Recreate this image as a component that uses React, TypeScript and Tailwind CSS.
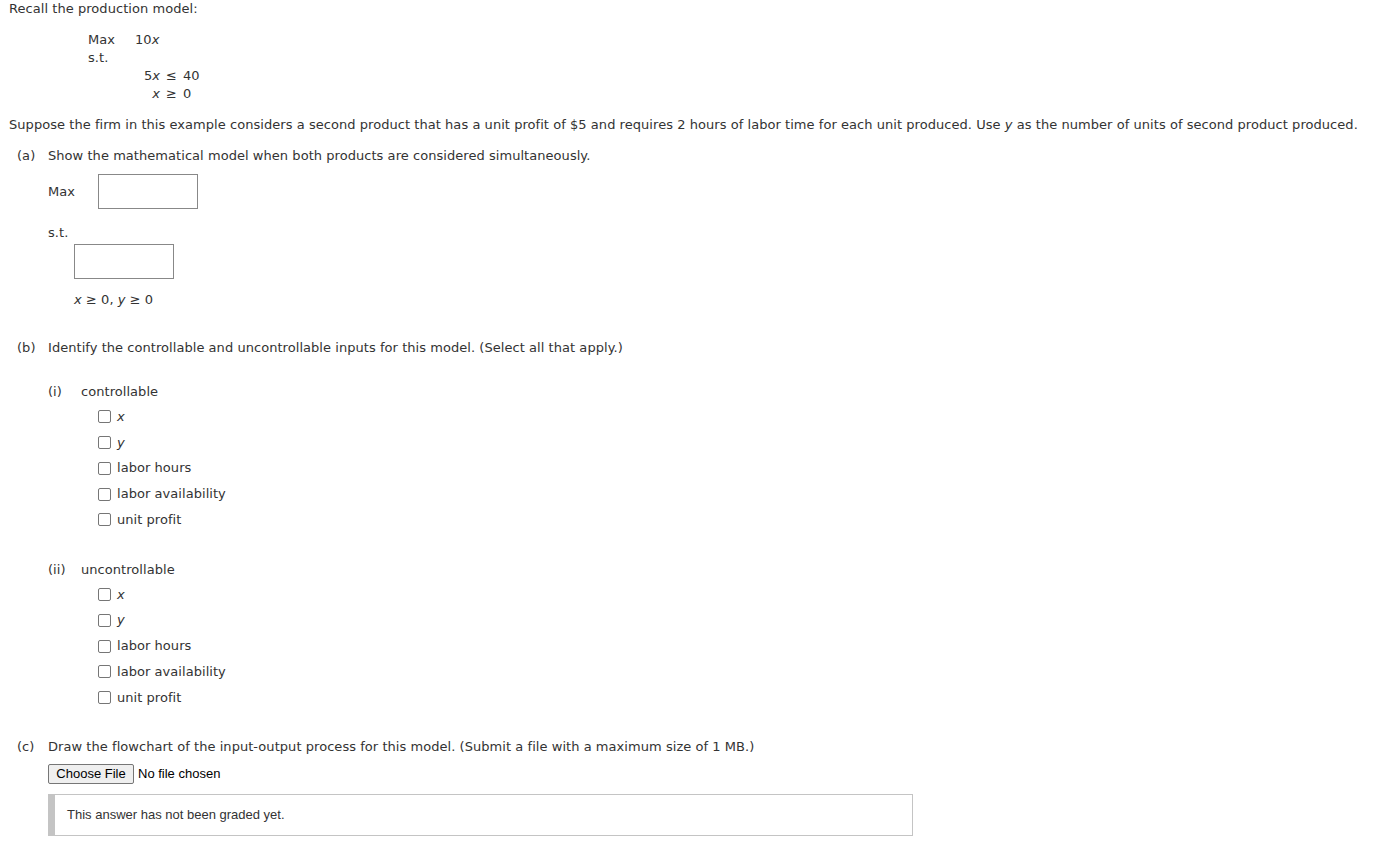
export default function App() {
  const options = ['x', 'y', 'labor hours', 'labor availability', 'unit profit'];

  const CheckList = () => (
    <div className="ml-[50px]">
      {options.map((o) => (
        <label key={o} className="flex h-[25.75px] items-center gap-[6px]">
          <span className="inline-block h-[13px] w-[13px] rounded-[2px] border border-[#767676] bg-white" />
          {o.length === 1 ? <i>{o}</i> : <span>{o}</span>}
        </label>
      ))}
    </div>
  );

  return (
    <div className="min-h-screen bg-white px-[9px] text-[13px] leading-[18px] tracking-[0.05px] text-[#333] font-['DejaVu_Sans',Verdana,sans-serif]">
      <p>Recall the production model:</p>

      {/* original model */}
      <div className="mt-[13px] ml-[79px]">
        <div className="flex">
          <span className="w-[47px]">Max</span>
          <span>
            10<i>x</i>
          </span>
        </div>
        <div>s.t.</div>
        <div className="ml-[55px] grid grid-cols-[17px_23px_auto]">
          <span className="text-right">
            5<i>x</i>
          </span>
          <span className="pl-[6px]">≤</span>
          <span>40</span>
          <span className="text-right">
            <i>x</i>
          </span>
          <span className="pl-[6px]">≥</span>
          <span>0</span>
        </div>
      </div>

      <p className="mt-[13px]">
        Suppose the firm in this example considers a second product that has a unit profit of $5 and requires 2 hours of labor
        time for each unit produced. Use <i>y</i> as the number of units of second product produced.
      </p>

      {/* part a */}
      <div className="mt-[13px] flex pl-[8px]">
        <span className="w-[31px]">(a)</span>
        <span>Show the mathematical model when both products are considered simultaneously.</span>
      </div>
      <div className="ml-[39px]">
        <div className="mt-[9px] flex items-center">
          <span className="w-[50px]">Max</span>
          <div className="h-[35px] w-[100px] border border-[#888] bg-white" />
        </div>
        <div className="mt-[15px]">s.t.</div>
        <div className="ml-[26px]">
          <div className="mt-[2px] h-[35px] w-[100px] border border-[#888] bg-white" />
          <div className="mt-[12px]">
            <i>x</i> ≥ 0, <i>y</i> ≥ 0
          </div>
        </div>
      </div>

      {/* part b */}
      <div className="mt-[30px] flex pl-[8px]">
        <span className="w-[31px]">(b)</span>
        <span>Identify the controllable and uncontrollable inputs for this model. (Select all that apply.)</span>
      </div>
      <div className="ml-[39px]">
        <div className="mt-[26px] flex">
          <span className="w-[33px]">(i)</span>
          <span>controllable</span>
        </div>
        <div className="mt-[3px]">
          <CheckList />
        </div>
        <div className="mt-[28px] flex">
          <span className="w-[33px]">(ii)</span>
          <span>uncontrollable</span>
        </div>
        <div className="mt-[3px]">
          <CheckList />
        </div>
      </div>

      {/* part c */}
      <div className="mt-[27px] flex pl-[8px]">
        <span className="w-[31px]">(c)</span>
        <span>Draw the flowchart of the input-output process for this model. (Submit a file with a maximum size of 1 MB.)</span>
      </div>
      <div className="ml-[39px] tracking-normal font-['Liberation_Sans',Arial,sans-serif]">
        <div className="mt-[8px] flex items-center">
          <button className="h-[20px] w-[86px] rounded-[2px] border border-[#767676] bg-[#efefef] text-[13px] leading-[18px] text-black">
            Choose File
          </button>
          <span className="ml-[4px] text-black">No file chosen</span>
        </div>
        <div className="mt-[10px] flex h-[42px] w-[865px] items-center border border-l-[7px] border-[#c4c4c4] pl-[12px] text-[13px]">
          This answer has not been graded yet.
        </div>
      </div>
    </div>
  );
}
